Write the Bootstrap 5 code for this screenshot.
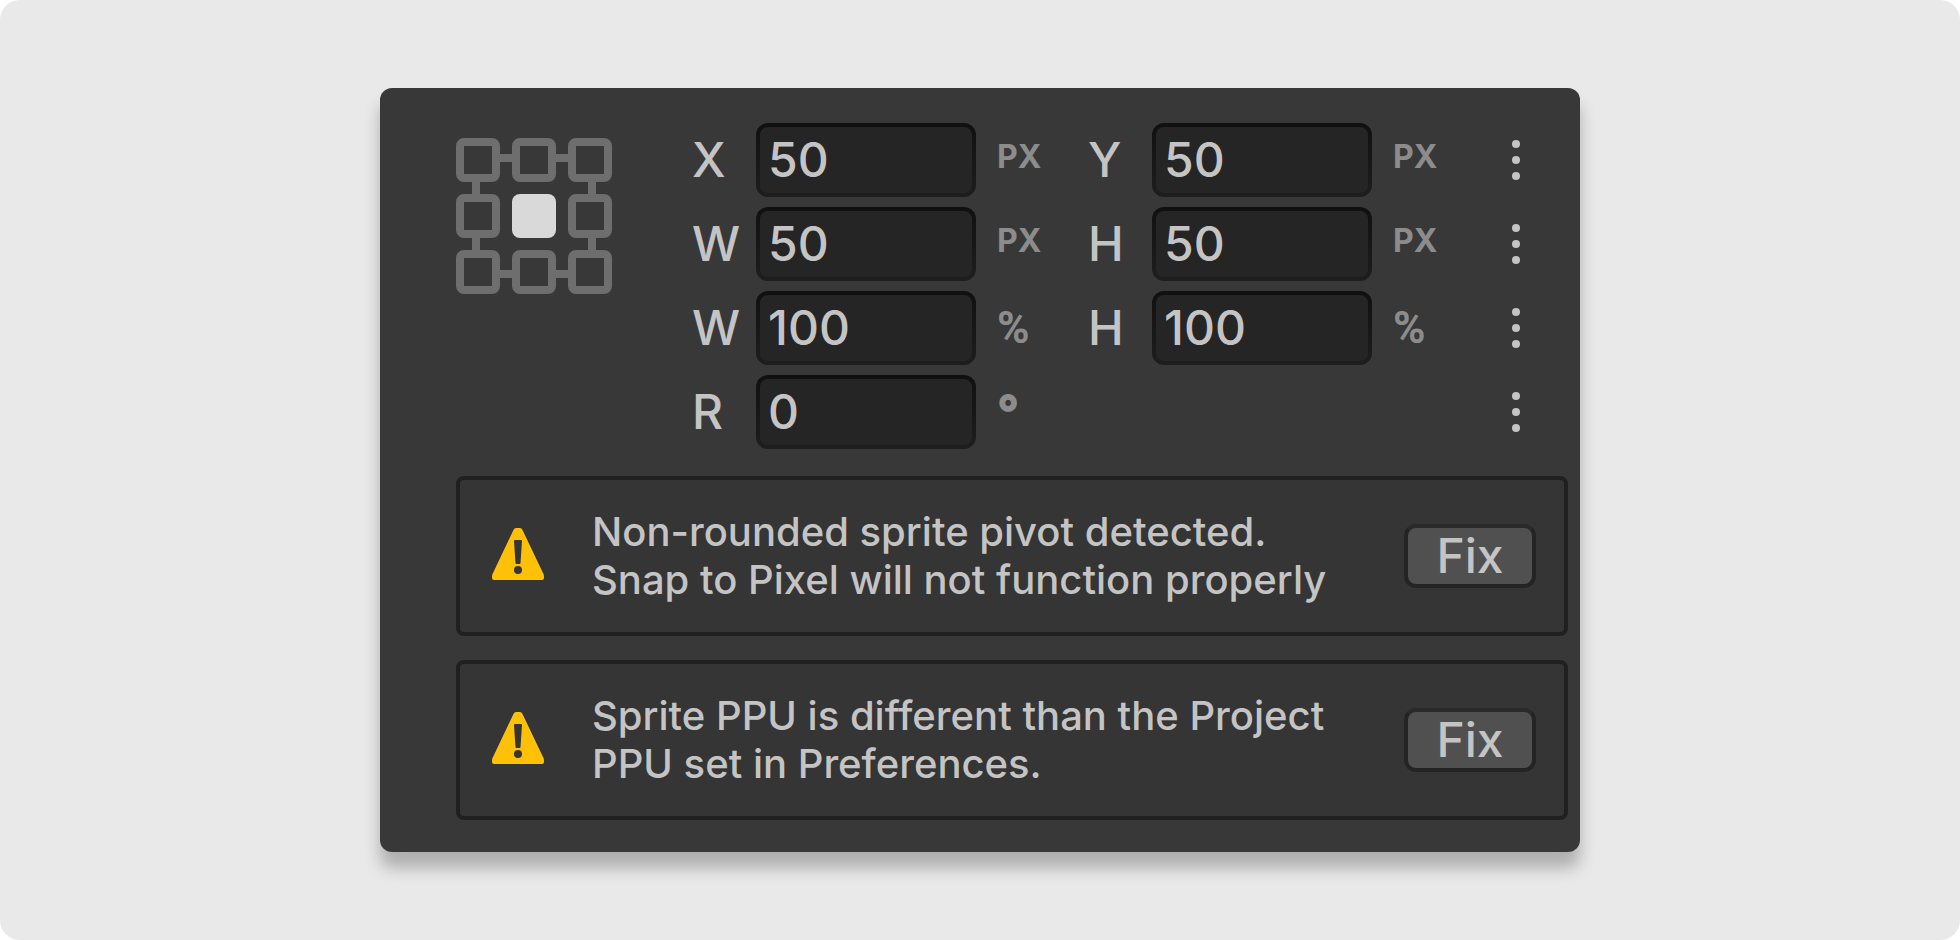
<!DOCTYPE html>
<html lang="en">
<head>
<meta charset="utf-8">
<meta name="viewport" content="width=device-width, initial-scale=1">
<title>Sprite transform</title>
<link href="https://cdn.jsdelivr.net/npm/bootstrap@5.3.0/dist/css/bootstrap.min.css" rel="stylesheet">
<style>
  body { background: #fff; font-family: Inter, "Liberation Sans", sans-serif; font-weight: 500; color: #c4c4c4; }
  .stage { background: #e9e9e9; border-radius: 20px; }
  .inspector { max-width: 1200px; background: #383838; border-radius: 12px; padding: 35px 12px 32px 76px; box-shadow: 0 16px 16px rgba(0, 0, 0, .25); }
  .pivot { width: 156px; height: 156px; margin-top: 15px; }
  .fields { display: grid; grid-template-columns: 396px 396px 48px; row-gap: 10px; margin-right: 36px; }
  .field-name { width: 64px; font-size: 48px; line-height: 74px; }
  .field-box { width: 220px; height: 74px; padding: 0 8px 2px; font-size: 48px; font-weight: 500; color: #c4c4c4; background: linear-gradient(#252525, #252525) padding-box, linear-gradient(#101010, #1e1e1e) border-box; border: 4px solid transparent; border-radius: 12px; }
  .field-box:focus { color: #c4c4c4; background: #252525; border-color: #3a79bb; box-shadow: none; }
  .unit { margin-left: 21px; color: #8c8c8c; font-size: 32px; font-weight: 700; line-height: 68px; }
  .unit-percent { font-family: Roboto, sans-serif; font-size: 44px; line-height: 74px; }
  .unit-degree { font-size: 48px; font-weight: 900; line-height: 74px; }
  .more { width: 32px; height: 74px; justify-self: end; }
  .notices { margin-top: 27px; gap: 24px; }
  .notice { min-height: 160px; background: #353535; border: 4px solid #202020; border-radius: 8px; padding: 0 28px 0 32px; }
  .notice-icon { width: 52px; height: 52px; margin: 0 48px 4px 0; }
  .notice-text { font-size: 40px; line-height: 48px; }
  .fix { width: 132px; height: 64px; padding: 0; font-size: 48px; font-weight: 500; line-height: 56px; color: #c4c4c4; background: #505050; border: 4px solid #242424; border-top-color: #2a2a2a; border-radius: 12px; }
  .fix:hover { color: #fff; background: #5c5c5c; border-color: #242424; }
</style>
</head>
<body>
<main class="stage min-vh-100 d-flex align-items-center justify-content-center">
  <section class="inspector w-100">
    <div class="d-flex justify-content-between">
      <svg class="pivot flex-shrink-0" viewBox="0 0 156 156" role="img" aria-label="Pivot: center">
        <g fill="#6e6e6e">
          <path d="M44 16h12v8H44zM100 16h12v8h-12zM44 132h12v8H44zM100 132h12v8h-12zM16 44h8v12h-8zM16 100h8v12h-8zM132 44h8v12h-8zM132 100h8v12h-8z"/>
        </g>
        <defs>
          <path id="cell" fill="#6e6e6e" fill-rule="evenodd" d="M8 0h28a8 8 0 0 1 8 8v28a8 8 0 0 1-8 8H8a8 8 0 0 1-8-8V8a8 8 0 0 1 8-8zM8 8v28h28V8z"/>
        </defs>
        <use href="#cell"/><use href="#cell" x="56"/><use href="#cell" x="112"/>
        <use href="#cell" y="56"/><use href="#cell" x="112" y="56"/>
        <use href="#cell" y="112"/><use href="#cell" x="56" y="112"/><use href="#cell" x="112" y="112"/>
        <rect x="56" y="56" width="44" height="44" rx="8" fill="#d9d9d9"/>
      </svg>

      <form class="fields">
        <div class="d-flex">
          <label class="field-name" for="pos-x">X</label>
          <input class="form-control field-box" id="pos-x" type="text" value="50">
          <span class="unit">PX</span>
        </div>
        <div class="d-flex">
          <label class="field-name" for="pos-y">Y</label>
          <input class="form-control field-box" id="pos-y" type="text" value="50">
          <span class="unit">PX</span>
        </div>
        <button class="btn border-0 p-0 more" type="button" aria-label="Position options"><svg class="d-block mx-auto" width="8" height="40" fill="#c4c4c4"><circle cx="4" cy="4" r="4"/><circle cx="4" cy="20" r="4"/><circle cx="4" cy="36" r="4"/></svg></button>

        <div class="d-flex">
          <label class="field-name" for="size-w">W</label>
          <input class="form-control field-box" id="size-w" type="text" value="50">
          <span class="unit">PX</span>
        </div>
        <div class="d-flex">
          <label class="field-name" for="size-h">H</label>
          <input class="form-control field-box" id="size-h" type="text" value="50">
          <span class="unit">PX</span>
        </div>
        <button class="btn border-0 p-0 more" type="button" aria-label="Size options"><svg class="d-block mx-auto" width="8" height="40" fill="#c4c4c4"><circle cx="4" cy="4" r="4"/><circle cx="4" cy="20" r="4"/><circle cx="4" cy="36" r="4"/></svg></button>

        <div class="d-flex">
          <label class="field-name" for="scale-w">W</label>
          <input class="form-control field-box" id="scale-w" type="text" value="100">
          <span class="unit unit-percent">%</span>
        </div>
        <div class="d-flex">
          <label class="field-name" for="scale-h">H</label>
          <input class="form-control field-box" id="scale-h" type="text" value="100">
          <span class="unit unit-percent">%</span>
        </div>
        <button class="btn border-0 p-0 more" type="button" aria-label="Scale options"><svg class="d-block mx-auto" width="8" height="40" fill="#c4c4c4"><circle cx="4" cy="4" r="4"/><circle cx="4" cy="20" r="4"/><circle cx="4" cy="36" r="4"/></svg></button>

        <div class="d-flex">
          <label class="field-name" for="rotation">R</label>
          <input class="form-control field-box" id="rotation" type="text" value="0">
          <span class="unit unit-degree">°</span>
        </div>
        <div></div>
        <button class="btn border-0 p-0 more" type="button" aria-label="Rotation options"><svg class="d-block mx-auto" width="8" height="40" fill="#c4c4c4"><circle cx="4" cy="4" r="4"/><circle cx="4" cy="20" r="4"/><circle cx="4" cy="36" r="4"/></svg></button>
      </form>
    </div>

    <div class="notices d-flex flex-column">
      <div class="notice d-flex align-items-center" role="alert">
        <svg class="notice-icon flex-shrink-0" viewBox="0 0 52 52" aria-hidden="true"><path fill="#ffc107" d="M24 0h4q2 0 3 3l20 42q1 1 1 4v1q0 2-2 2H2q-2 0-2-2v-1q0-3 1-4L21 3q1-3 3-3z"/><path fill="#353535" d="M22 13q0-1 1-1h6q1 0 1 1l-1.500 22q0 1-1 1h-3q-1 0-1-1z"/><circle cx="26" cy="42" r="4" fill="#353535"/></svg>
        <div class="notice-text flex-grow-1">Non-rounded sprite pivot detected.<br>Snap to Pixel will not function properly</div>
        <button class="btn fix flex-shrink-0" type="button">Fix</button>
      </div>
      <div class="notice d-flex align-items-center" role="alert">
        <svg class="notice-icon flex-shrink-0" viewBox="0 0 52 52" aria-hidden="true"><path fill="#ffc107" d="M24 0h4q2 0 3 3l20 42q1 1 1 4v1q0 2-2 2H2q-2 0-2-2v-1q0-3 1-4L21 3q1-3 3-3z"/><path fill="#353535" d="M22 13q0-1 1-1h6q1 0 1 1l-1.500 22q0 1-1 1h-3q-1 0-1-1z"/><circle cx="26" cy="42" r="4" fill="#353535"/></svg>
        <div class="notice-text flex-grow-1">Sprite PPU is different than the Project<br>PPU set in Preferences.</div>
        <button class="btn fix flex-shrink-0" type="button">Fix</button>
      </div>
    </div>
  </section>
</main>
<script src="https://cdn.jsdelivr.net/npm/bootstrap@5.3.0/dist/js/bootstrap.bundle.min.js"></script>
</body>
</html>
